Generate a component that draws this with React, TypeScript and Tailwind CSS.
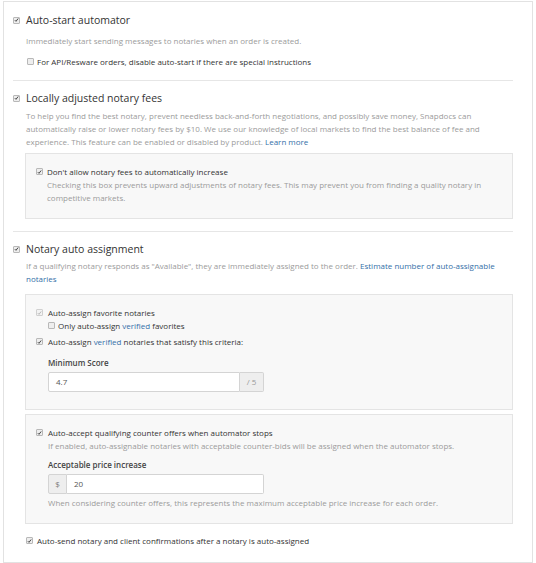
import React from "react";

function Check({ checked = false, disabled = false }: { checked?: boolean; disabled?: boolean }) {
  return (
    <span
      className={`inline-flex shrink-0 items-center justify-center w-[7px] h-[7px] rounded-[1px] border ${
        disabled ? "border-[#d0d0d0] bg-[#f3f3f3]" : "border-[#b8b8b8] bg-[#eeeeee]"
      }`}
    >
      {checked && (
        <svg width="6" height="6" viewBox="0 0 6 6">
          <path
            d="M1 3.2 L2.4 4.6 L5 1.2"
            fill="none"
            stroke={disabled ? "#b0b0b0" : "#333"}
            strokeWidth="1.1"
          />
        </svg>
      )}
    </span>
  );
}

const desc = "text-[8px] leading-[13px] text-[#9b9b9b]";
const label = "text-[8px] leading-[13px] text-[#333]";
const link = "text-[#346fa8]";
const title = "text-[10.5px] leading-[14px] text-[#333]";

export default function App() {
  return (
    <div className="w-[536px] h-[563px] bg-white pl-[3px] pt-[1px]" style={{ fontFamily: "'Open Sans', 'Liberation Sans', sans-serif" }}>
      <div className="w-[530px] h-[562px] border border-[#e2e2e2] pl-[9px] pr-[19px]">
        {/* Section 1 */}
        <div className="pt-[11px] pb-[12px] border-b border-[#e6e6e6]">
          <div className="flex items-center">
            <span className="w-[13px] flex"><Check checked /></span>
            <span className={title}>Auto-start automator</span>
          </div>
          <div className="pl-[13px]">
            <div className={`${desc} mt-[7px]`}>Immediately start sending messages to notaries when an order is created.</div>
            <div className="flex items-center mt-[8px]">
              <span className="w-[11px] pl-[1px] flex"><Check /></span>
              <span className={label}>For API/Resware orders, disable auto-start if there are special instructions</span>
            </div>
          </div>
        </div>

        {/* Section 2 */}
        <div className="pt-[10px] pb-[12px] border-b border-[#e6e6e6]">
          <div className="flex items-center">
            <span className="w-[13px] flex"><Check checked /></span>
            <span className={title}>Locally adjusted notary fees</span>
          </div>
          <div className="pl-[13px]">
            <div className={`${desc} mt-[4px]`}>
              To help you find the best notary, prevent needless back-and-forth negotiations, and possibly save money, Snapdocs can
              <br />
              automatically raise or lower notary fees by $10. We use our knowledge of local markets to find the best balance of fee and
              <br />
              experience. This feature can be enabled or disabled by product. <span className={link}>Learn more</span>
            </div>
            <div className="mt-[5px] -ml-[1px] border border-[#e4e4e4] bg-[#f8f8f8] pl-[10px] pr-[10px] pt-[11px] pb-[14px]">
              <div className="flex items-center">
                <span className="w-[11px] flex"><Check checked /></span>
                <span className={label}>Don't allow notary fees to automatically increase</span>
              </div>
              <div className={`${desc} pl-[11px]`}>
                Checking this box prevents upward adjustments of notary fees. This may prevent you from finding a quality notary in
                <br />
                competitive markets.
              </div>
            </div>
          </div>
        </div>

        {/* Section 3 */}
        <div className="pt-[10px] pb-[16px]">
          <div className="flex items-center">
            <span className="w-[13px] flex"><Check checked /></span>
            <span className={title}>Notary auto assignment</span>
          </div>
          <div className="pl-[13px]">
            <div className={`${desc} mt-[3px]`}>
              If a qualifying notary responds as "Available", they are immediately assigned to the order.{" "}
              <span className={link}>Estimate number of auto-assignable</span>
              <br />
              <span className={link}>notaries</span>
            </div>

            <div className="mt-[9px] -ml-[1px] border border-[#e4e4e4] bg-[#f8f8f8] pl-[10px] pr-[10px] pt-[11px] pb-[17px]">
              <div className="flex items-center">
                <span className="w-[12px] flex"><Check checked disabled /></span>
                <span className={label}>Auto-assign favorite notaries</span>
              </div>
              <div className="flex items-center pl-[12px]">
                <span className="w-[10px] flex"><Check /></span>
                <span className={label}>
                  Only auto-assign <span className={link}>verified</span> favorites
                </span>
              </div>
              <div className="flex items-center mt-[3px]">
                <span className="w-[12px] flex"><Check checked /></span>
                <span className={label}>
                  Auto-assign <span className={link}>verified</span> notaries that satisfy this criteria:
                </span>
              </div>
              <div className="pl-[12px]">
                <div className="mt-[8px] text-[8px] leading-[13px] font-semibold text-[#444]">Minimum Score</div>
                <div className="mt-[3px] flex w-[216px] h-[20px]">
                  <div className="flex-1 border border-[#d4d4d4] bg-white rounded-l-[2px] flex items-center pl-[7px] text-[8px] text-[#555]">4.7</div>
                  <div className="w-[24px] border border-l-0 border-[#d4d4d4] bg-[#eeeeee] rounded-r-[2px] flex items-center justify-center text-[8px] text-[#999]">/ 5</div>
                </div>
              </div>
            </div>

            <div className="mt-[4px] -ml-[1px] border border-[#e4e4e4] bg-[#f8f8f8] pl-[10px] pr-[10px] pt-[11px] pb-[14px]">
              <div className="flex items-center">
                <span className="w-[12px] flex"><Check checked /></span>
                <span className={label}>Auto-accept qualifying counter offers when automator stops</span>
              </div>
              <div className="pl-[12px]">
                <div className={desc}>If enabled, auto-assignable notaries with acceptable counter-bids will be assigned when the automator stops.</div>
                <div className="mt-[6px] text-[8px] leading-[13px] font-semibold text-[#444]">Acceptable price increase</div>
                <div className="mt-[3px] flex w-[216px] h-[20px]">
                  <div className="w-[19px] border border-[#d4d4d4] bg-[#eeeeee] rounded-l-[2px] flex items-center justify-center text-[8px] text-[#777]">$</div>
                  <div className="flex-1 border border-l-0 border-[#d4d4d4] bg-white rounded-r-[2px] flex items-center pl-[7px] text-[8px] text-[#555]">20</div>
                </div>
                <div className={`${desc} mt-[2px]`}>When considering counter offers, this represents the maximum acceptable price increase for each order.</div>
              </div>
            </div>

            <div className="flex items-center mt-[10px]">
              <span className="w-[11px] flex"><Check checked /></span>
              <span className={label}>Auto-send notary and client confirmations after a notary is auto-assigned</span>
            </div>
          </div>
        </div>
      </div>
    </div>
  );
}
